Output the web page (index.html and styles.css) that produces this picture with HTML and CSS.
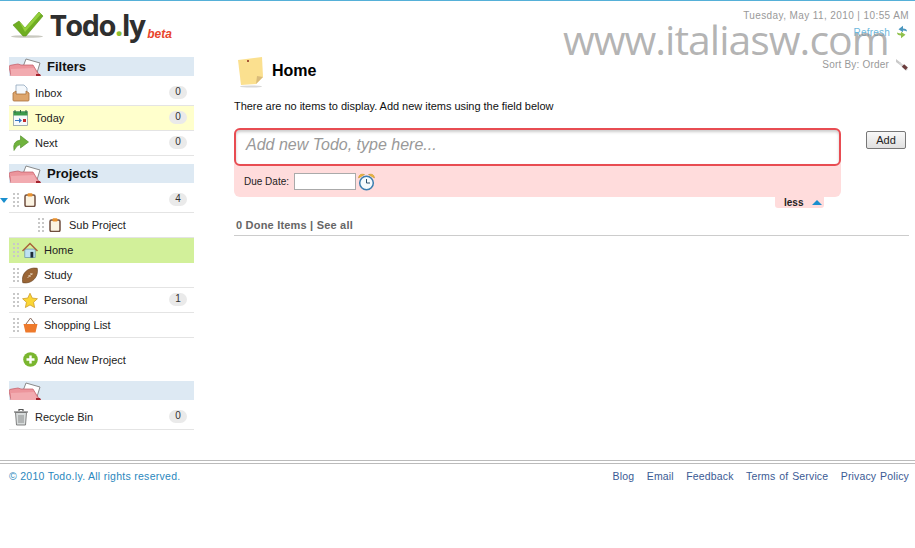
FILE: index.html
```html
<!DOCTYPE html>
<html lang="en">
<head>
<meta charset="utf-8">
<title>Todo.ly</title>
<link rel="stylesheet" href="styles.css">
</head>
<body>
<svg class="defs" width="0" height="0" aria-hidden="true">
  <defs>
    <symbol id="folder" viewBox="0 0 32 19">
      <path d="M12 15 L17 2 L31 6 L27 19 Z" fill="#fff" stroke="#8a8a8a" stroke-width="1"/>
      <path d="M0 10 Q0 8 3 8 L9 7 L12 8 L24 8 L27 13 L31 19 L2 19 Z" fill="#ec959c" stroke="#c25a64" stroke-width=".7"/>
      <path d="M2 12 L25 11 L29 19 L2 19 Z" fill="#f2abb0"/>
      <path d="M27 17 L31 17 L32 19 L27 19 Z" fill="#a3222c"/>
    </symbol>
    <symbol id="clip" viewBox="0 0 12 14">
      <rect x="1" y="2" width="10" height="11.500" rx="1.500" fill="#fbf3e2" stroke="#6f4e3f" stroke-width="1.500"/>
      <rect x="3.500" y="0.300" width="5" height="3.200" rx="1" fill="#e8912f"/>
    </symbol>
  </defs>
</svg>

<div class="watermark">www.italiasw.com</div>

<header class="top">
  <div class="logo">
    <svg class="check" width="34" height="30" viewBox="0 0 34 30">
      <ellipse cx="17" cy="26.500" rx="16" ry="1.300" fill="#c9c9c0"/>
      <path d="M3 15 L9 11 L15 18 L29 2 L33 6 L16 26 L13 26 Z" fill="#6fae22" stroke="#5a9416" stroke-width=".6"/>
      <path d="M9 11 L15 18 L29 2 L31 4 L15 22 Z" fill="#93cf3c"/>
    </svg>
    <span class="brand">Todo<span class="dot">.</span>ly</span>
    <span class="beta">beta</span>
  </div>
  <div class="meta">
    <div class="date">Tuesday, May 11, 2010 | 10:55 AM</div>
    <div class="meta-row refresh">Refresh
      <svg width="12" height="14" viewBox="0 0 12 14">
        <path d="M11 6.500 Q11 3.500 7 3.500 V.8 L2.500 4.200 L7 7.200 V5.500 Q9 5.500 11 6.500 Z" fill="#4b97bf"/>
        <path d="M1 7.500 Q1 10.500 5 10.500 V13.200 L9.500 9.800 L5 6.800 V8.500 Q3 8.500 1 7.500 Z" fill="#8fc04a"/>
      </svg>
    </div>
    <div class="meta-row sort">Sort By: Order
      <svg width="14" height="14" viewBox="0 0 14 14">
        <path d="M1 2 L6 6 L5 8 L1 5 Z" fill="#c9c9c9"/>
        <path d="M5 5 L13 12 L11 14 L4 7 Z" fill="#d5d5d5"/>
        <rect x="7.500" y="8.500" width="5" height="3.400" transform="rotate(42 10 10)" fill="#6b3d3d"/>
      </svg>
    </div>
  </div>
</header>

<div class="layout">
  <aside class="sidebar">
    <section class="group">
      <h2 class="group-head"><svg class="folder" width="32" height="19"><use href="#folder"/></svg>Filters</h2>
      <ul class="list">
        <li class="row filter">
          <svg class="f-icon" width="18" height="18" viewBox="0 0 18 18">
            <path d="M4 1 H12 L15 4 V11 H4 Z" fill="#f4f8fc" stroke="#8fa6bd" stroke-width=".8"/>
            <path d="M1 9 L4 7 V10 H14 V7 L17 9 V16 Q17 17 16 17 H2 Q1 17 1 16 Z" fill="#dda56c" stroke="#a9713c" stroke-width=".8"/>
          </svg>
          <span class="label">Inbox</span><span class="badge">0</span>
        </li>
        <li class="row filter today">
          <svg class="f-icon" width="16" height="16" viewBox="0 0 16 16">
            <rect x=".5" y="1.500" width="14" height="14" fill="#f7fafc" stroke="#7c8f9c" stroke-width=".7"/>
            <rect x=".5" y="1.500" width="14" height="4" fill="#3c9a4b"/>
            <path d="M2 0 V3 M7.500 0 V3 M13 0 V3" stroke="#2d6d38" stroke-width="1"/>
            <path d="M2 10 H6 V8 L9 10.500 L6 13 V11 H2 Z" fill="#3778c4"/>
            <rect x="10" y="9" width="3" height="3" fill="#c22a2a"/>
          </svg>
          <span class="label">Today</span><span class="badge">0</span>
        </li>
        <li class="row filter">
          <svg class="f-icon" width="16" height="16" viewBox="0 0 16 16">
            <path d="M1 15.500 Q-1 6 7.500 5 V.8 L15.500 7 L7.500 13 V9.500 Q4 9.500 1 15.500 Z" fill="#6fb33d" stroke="#4f8a26" stroke-width=".6"/>
          </svg>
          <span class="label">Next</span><span class="badge">0</span>
        </li>
      </ul>
    </section>

    <section class="group">
      <h2 class="group-head"><svg class="folder" width="32" height="19"><use href="#folder"/></svg>Projects</h2>
      <ul class="list">
        <li class="row project">
          <span class="caret"></span><span class="grip"></span>
          <span class="p-slot"><svg width="12" height="14"><use href="#clip"/></svg></span>
          <span class="label">Work</span><span class="badge">4</span>
        </li>
        <li class="row project sub">
          <span class="grip"></span>
          <span class="p-slot"><svg width="12" height="14"><use href="#clip"/></svg></span>
          <span class="label">Sub Project</span>
        </li>
        <li class="row project home">
          <span class="grip"></span>
          <span class="p-slot">
            <svg width="17" height="17" viewBox="0 0 17 17">
              <rect x="3" y="7" width="11" height="9" fill="#bfe2f2" stroke="#5d8aa5" stroke-width=".7"/>
              <path d="M0.500 9 L8.500 1 L16.500 9" fill="none" stroke="#a8603a" stroke-width="1.600"/>
              <rect x="9" y="10" width="3" height="6" fill="#1d2c3a"/>
            </svg>
          </span>
          <span class="label">Home</span>
        </li>
        <li class="row project">
          <span class="grip"></span>
          <span class="p-slot">
            <svg width="17" height="17" viewBox="0 0 17 17">
              <path d="M.8 16.200 C-1.500 7 6 -1 16.200 .8 C18 10 10.500 18 .8 16.200 Z" fill="#9a6535" stroke="#5f3a1b" stroke-width=".6"/>
              <path d="M6 11 L11 6 M7 8 L9 10 M9 6 L11 8" stroke="#f2e6d4" stroke-width=".9"/>
            </svg>
          </span>
          <span class="label">Study</span>
        </li>
        <li class="row project">
          <span class="grip"></span>
          <span class="p-slot">
            <svg width="17" height="17" viewBox="0 0 17 17">
              <path d="M8.500 .8 L10.900 5.900 L16.400 6.600 L12.300 10.400 L13.400 16 L8.500 13.200 L3.600 16 L4.700 10.400 L.6 6.600 L6.100 5.900 Z" fill="#fbd635" stroke="#c9982a" stroke-width=".8"/>
            </svg>
          </span>
          <span class="label">Personal</span><span class="badge">1</span>
        </li>
        <li class="row project">
          <span class="grip"></span>
          <span class="p-slot">
            <svg width="15" height="16" viewBox="0 0 15 16">
              <path d="M3 7 L7.500 1 L12 7" fill="none" stroke="#8a6a5a" stroke-width="1"/>
              <path d="M.5 7 H14.500 L12.500 15.500 H2.500 Z" fill="#ee7a2c"/>
            </svg>
          </span>
          <span class="label">Shopping List</span>
        </li>
      </ul>
      <div class="add-project">
        <svg width="15" height="15" viewBox="0 0 15 15">
          <circle cx="7.500" cy="7.500" r="7.300" fill="#7ab62f"/>
          <path d="M7.500 3.500 V11.500 M3.500 7.500 H11.500" stroke="#fff" stroke-width="2.400"/>
        </svg>
        <span class="label">Add New Project</span>
      </div>
    </section>

    <section class="group">
      <h2 class="group-head"><svg class="folder" width="32" height="19"><use href="#folder"/></svg></h2>
      <ul class="list">
        <li class="row filter">
          <svg class="f-icon" width="16" height="18" viewBox="0 0 16 18">
            <path d="M1 4 H15 M6 3 V1.500 H10 V3" fill="none" stroke="#555" stroke-width="1.200"/>
            <path d="M2.500 4.500 L3.500 17 H12.500 L13.500 4.500 Z" fill="#d8dcdc" stroke="#666" stroke-width=".8"/>
            <path d="M6 7 V15 M8 7 V15 M10 7 V15" stroke="#777" stroke-width=".8"/>
          </svg>
          <span class="label">Recycle Bin</span><span class="badge">0</span>
        </li>
      </ul>
    </section>
  </aside>

  <main class="content">
    <div class="title-row">
      <svg width="28" height="31" viewBox="0 0 28 31">
        <ellipse cx="14" cy="29.500" rx="11" ry="1" fill="#d8d8d8"/>
        <path d="M1 3 L25 0 L26 20 L19 27 L4 28 Z" fill="#fbe08f"/>
        <path d="M19 27 L20 19 L26 20 Z" fill="#d9bb7a"/>
        <circle cx="11" cy="4" r="1" fill="#8b2a1a"/>
      </svg>
      <h1 class="title">Home</h1>
    </div>
    <p class="empty">There are no items to display. Add new items using the field below</p>

    <div class="entry">
      <div class="composer">
        <div class="todo-input">Add new Todo, type here...</div>
        <div class="due">
          <span>Due Date:</span>
          <span class="date-box"></span>
          <svg width="17" height="18" viewBox="0 0 17 18">
            <circle cx="8.500" cy="10" r="6.800" fill="#f5fafd" stroke="#3c7fb0" stroke-width="1.500"/>
            <path d="M8.500 6 V10 H12" fill="none" stroke="#2b4f6b" stroke-width="1"/>
            <path d="M.5 5 Q1 0 6.500 1.500 Z M16.500 5 Q16 0 10.500 1.500 Z" fill="#f0b93a" stroke="#b98a1f" stroke-width=".5"/>
          </svg>
        </div>
        <div class="less">less <span class="up"></span></div>
      </div>
      <button class="add-btn" type="button">Add</button>
    </div>

    <div class="done"><span>0 Done Items | See all</span></div>
  </main>
</div>

<footer class="footer">
  <span class="copy">© 2010 Todo.ly. All rights reserved.</span>
  <nav class="links">
    <a>Blog</a><a>Email</a><a>Feedback</a><a>Terms of Service</a><a>Privacy Policy</a>
  </nav>
</footer>
</body>
</html>
```

FILE: styles.css
```css
* { box-sizing: border-box; }
html, body { margin: 0; padding: 0; }
body {
  position: relative;
  width: 915px;
  height: 548px;
  overflow: hidden;
  background: #fff;
  border-top: 1px solid #55b0d8;
  font-family: "Liberation Sans", Arial, sans-serif;
  font-size: 11px;
  color: #222;
}
.defs { display: block; height: 0; }

.watermark {
  position: absolute;
  left: 563px;
  top: 13px;
  font-family: "Open Sans", sans-serif;
  font-size: 41px;
  line-height: 50px;
  letter-spacing: -1px;
  color: rgba(130, 130, 130, .6);
  white-space: nowrap;
  pointer-events: none;
}

.top {
  display: flex;
  justify-content: space-between;
  height: 56px;
  padding: 9px 6px 0 10px;
}
.logo { display: flex; align-items: flex-start; }
.check { margin-right: 6px; }
.brand {
  font-family: "Open Sans", "Liberation Sans", sans-serif;
  font-weight: 700;
  font-size: 29px;
  line-height: 30px;
  letter-spacing: -1.500px;
  color: #2f2f2f;
}
.dot { color: #8cc031; }
.beta {
  margin: 17px 0 0 3px;
  font-style: italic;
  font-weight: 700;
  font-size: 12px;
  line-height: 14px;
  color: #e8452c;
}
.meta { text-align: right; font-size: 10px; color: #999; }
.date { line-height: 12px; letter-spacing: .4px; }
.meta-row { display: flex; justify-content: flex-end; align-items: center; gap: 6px; }
.refresh { margin-top: 2px; height: 16px; color: #6cb7dc; letter-spacing: .2px; padding-right: 1px; }
.sort { margin-top: 16px; height: 16px; color: #999; letter-spacing: .2px; }

.layout { display: flex; height: 403px; }
.sidebar { width: 185px; margin-left: 9px; flex: none; }
.group { margin-bottom: 8px; }
.group-head {
  display: flex;
  align-items: center;
  height: 19px;
  margin: 0 0 5px;
  background: #dde9f3;
  font-size: 13px;
  line-height: 19px;
  color: #111;
}
.folder { margin-right: 6px; flex: none; }
.list { list-style: none; margin: 0; padding: 0; }
.row {
  position: relative;
  display: flex;
  align-items: center;
  height: 25px;
  border-bottom: 1px solid #e4e4e4;
  padding-right: 7px;
}
.label { flex: 1; white-space: nowrap; color: #222; }
.badge {
  flex: none;
  width: 18px;
  height: 13px;
  border-radius: 7px;
  background: #eaeaea;
  text-align: center;
  font-size: 10px;
  line-height: 12px;
  margin-top: -2px;
  color: #333;
}
.filter { padding-left: 3px; }
.f-icon { flex: none; width: 18px; margin-right: 5px; }
.today { background: #ffffcc; }
.project { padding-left: 4px; }
.grip {
  flex: none;
  width: 6px;
  height: 14px;
  margin-right: 3px;
  background-image: conic-gradient(#c8c8c8 25%, transparent 0);
  background-size: 4px 4px;
  background-position: -2px 0;
}
.p-slot { flex: none; width: 16px; margin-right: 6px; display: flex; justify-content: center; }
.sub { padding-left: 29px; }
.sub .p-slot { width: 14px; margin-left: 1px; margin-right: 7px; }
.home { background: #d2f09a; border-bottom-color: #d2f09a; }
.caret {
  position: absolute;
  left: -9px;
  top: 10px;
  border-style: solid;
  border-width: 5px 4.500px 0;
  border-color: #1b8fce transparent transparent;
}
.add-project {
  display: flex;
  align-items: center;
  gap: 6px;
  height: 43px;
  padding-left: 14px;
  margin-bottom: -8px;
}

.content { width: 675px; margin-left: 40px; flex: none; }
.title-row { display: flex; align-items: flex-start; gap: 7px; height: 31px; padding-left: 3px; }
.title { margin: 0; font-size: 16px; line-height: 28px; color: #000; }
.empty { margin: 12px 0 0; line-height: 13px; color: #111; letter-spacing: -.03px; }

.entry { display: flex; align-items: flex-start; margin-top: 15px; }
.composer {
  position: relative;
  width: 607px;
  height: 69px;
  background: #ffdcdc;
  border-radius: 6px;
}
.todo-input {
  height: 38px;
  background: #fff;
  border: 2px solid #e84c52;
  border-radius: 6px;
  box-shadow: inset 0 2px 3px #ccc;
  padding-left: 10px;
  font-size: 16px;
  font-style: italic;
  line-height: 29px;
  color: #999;
}
.due { display: flex; align-items: center; height: 31px; padding-left: 10px; font-size: 10px; color: #222; }
.date-box {
  width: 62px;
  height: 17px;
  margin: 0 2px 0 5px;
  background: #fff;
  border: 1px solid #aaa;
}
.less {
  position: absolute;
  left: 541px;
  top: 69px;
  display: flex;
  align-items: center;
  gap: 9px;
  width: 49px;
  height: 11px;
  padding-left: 9px;
  background: #ffdcdc;
  border-radius: 0 0 3px 3px;
  font-size: 10px;
  font-weight: 700;
  color: #222;
}
.up {
  width: 0;
  height: 0;
  border-style: solid;
  border-width: 0 5px 5px;
  border-color: transparent transparent #1b8fce;
}
.add-btn {
  width: 40px;
  height: 18px;
  margin: 3px 0 0 25px;
  padding: 0;
  background: linear-gradient(#f8f8f8, #e0e0e0);
  border: 1px solid #777;
  border-radius: 2px;
  font-family: inherit;
  font-size: 11px;
  color: #222;
}
.done {
  width: 675px;
  height: 18px;
  margin-top: 21px;
  padding-left: 2px;
  border-bottom: 1px solid #ccc;
  font-weight: 700;
  line-height: 14px;
  color: #666;
}
.done span { letter-spacing: .2px; }

.footer {
  display: flex;
  justify-content: space-between;
  height: 60px;
  padding: 6px 6px 0 9px;
  border-top: 4px double #bbb;
  line-height: 13px;
}
.copy { color: #2a87bd; font-size: 10.500px; letter-spacing: .28px; }
.links { display: flex; gap: 12.500px; word-spacing: .8px; }
.links a { color: #3a5a94; letter-spacing: .15px; font-size: 10.500px; }
```
